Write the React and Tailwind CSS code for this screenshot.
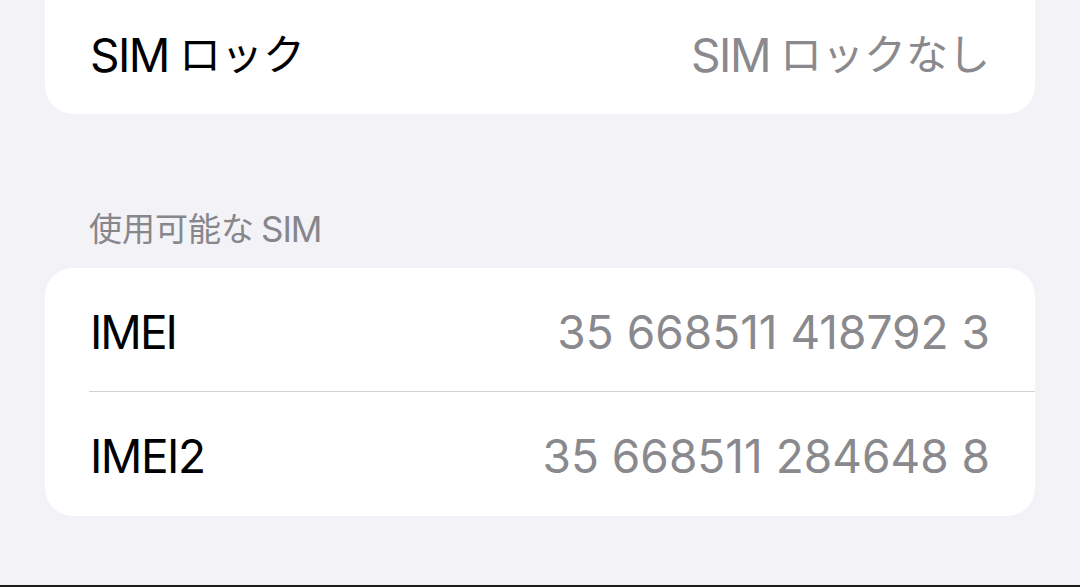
export default function App() {
  const sans = { fontFamily: 'Inter, "Noto Sans CJK JP", sans-serif' };

  const Label = ({ latin, kana, className }) => (
    <span className={`flex items-center leading-none ${className}`}>
      <span className="text-[46px] tracking-[-1.5px]">{latin}</span>
      {kana && <span className="ml-[10px] text-[42px]">{kana}</span>}
    </span>
  );

  return (
    <div
      className="flex h-[587px] w-[1080px] flex-col overflow-hidden bg-[#f2f2f7] antialiased"
      style={sans}
    >
      {/* Lock status card (scrolled partly out of view) */}
      <div className="mx-[45px] flex h-[114px] items-center justify-between rounded-b-[28px] bg-white px-[45px] pb-[4px]">
        <Label latin="SIM" kana="ロック" className="text-black" />
        <Label latin="SIM" kana="ロックなし" className="text-[#8a8a8e]" />
      </div>

      {/* Section header */}
      <div className="px-[89px] pb-[17px] pt-[93px]">
        <span className="flex h-[44px] items-center text-[#86868b]">
          <span className="text-[33px] leading-none">使用可能な</span>
          <span className="ml-[7px] text-[35px] leading-none tracking-[-1px]">SIM</span>
        </span>
      </div>

      {/* Device identifiers */}
      <div className="mx-[45px] flex flex-col rounded-[28px] bg-white">
        <div className="flex h-[123px] items-center justify-between px-[45px] pt-[4px]">
          <span className="text-[46px] leading-none tracking-[-2px] text-black">IMEI</span>
          <span className="text-[46px] leading-none text-[#8a8a8e]">35 668511 418792 3</span>
        </div>
        <div className="ml-[44px] h-px bg-[#d1d1d6]" />
        <div className="flex h-[124px] items-center justify-between px-[45px] pt-[4px]">
          <span className="text-[46px] leading-none tracking-[-1.5px] text-black">IMEI2</span>
          <span className="text-[46px] leading-none text-[#8a8a8e]">35 668511 284648 8</span>
        </div>
      </div>

      <div className="flex-1" />
      <div className="h-[2px] bg-[#1c1c1e]" />
    </div>
  );
}
